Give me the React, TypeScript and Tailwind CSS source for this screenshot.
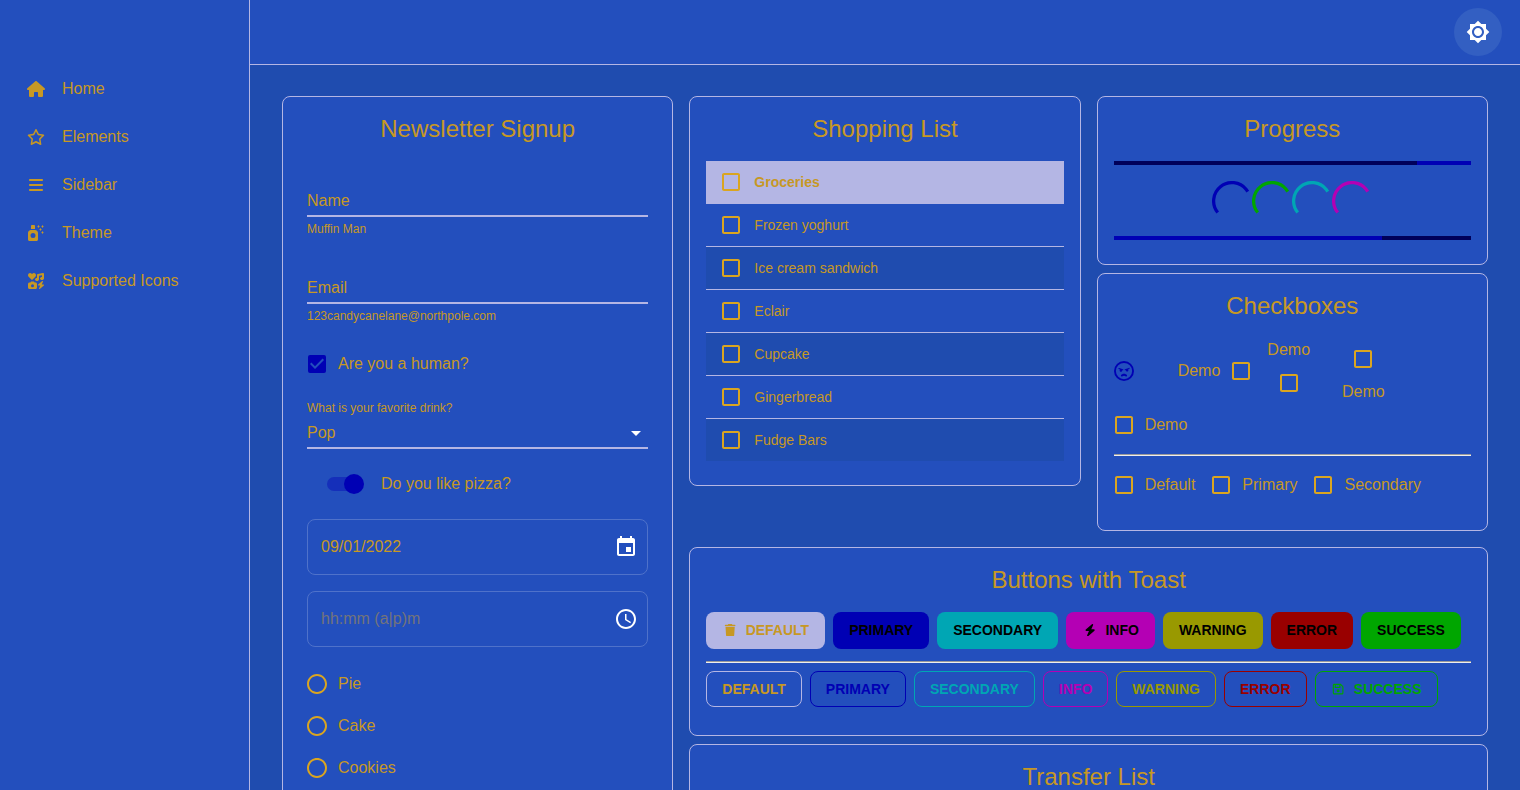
import type { ReactNode } from "react";
import { FaHouse, FaRegStar, FaBars, FaSprayCanSparkles, FaIcons, FaTrash, FaBolt, FaRegFloppyDisk, FaRegFaceAngry } from "react-icons/fa6";
import { MdBrightness7, MdCheckBoxOutlineBlank, MdCheckBox, MdRadioButtonUnchecked, MdArrowDropDown } from "react-icons/md";

const nav = [
  { label: "Home", icon: <FaHouse className="size-[18px]" /> },
  { label: "Elements", icon: <FaRegStar className="size-[18px]" /> },
  { label: "Sidebar", icon: <FaBars /> },
  { label: "Theme", icon: <FaSprayCanSparkles /> },
  { label: "Supported Icons", icon: <FaIcons /> },
];

const foods = ["Frozen yoghurt", "Ice cream sandwich", "Eclair", "Cupcake", "Gingerbread", "Fudge Bars"];

const solid = [
  { label: "Default", cls: "bg-[#b4b6e4] text-[#c79824]", icon: <FaTrash /> },
  { label: "Primary", cls: "bg-[#0000b4]" },
  { label: "Secondary", cls: "bg-[#00a6b4]" },
  { label: "Info", cls: "bg-[#b400b4]", icon: <FaBolt /> },
  { label: "Warning", cls: "bg-[#999900]" },
  { label: "Error", cls: "bg-[#990000]" },
  { label: "Success", cls: "bg-[#00a600]" },
];

const outlined = [
  { label: "Default", cls: "border-[#b4b6e4] text-[#c79824]" },
  { label: "Primary", cls: "border-[#0000b4] text-[#0000b4]" },
  { label: "Secondary", cls: "border-[#00a6b4] text-[#00a6b4]" },
  { label: "Info", cls: "border-[#b400b4] text-[#b400b4]" },
  { label: "Warning", cls: "border-[#999900] text-[#999900]" },
  { label: "Error", cls: "border-[#990000] text-[#990000]" },
  { label: "Success", cls: "border-[#00a600] text-[#00a600]", icon: <FaRegFloppyDisk /> },
];

function Card({ title, className, children }: { title: string; className: string; children?: ReactNode }) {
  return (
    <section className={`rounded-lg border border-[#b4b6e4] bg-[#234fbd] px-4 pt-4 ${className}`}>
      <h2 className="text-center text-2xl leading-8">{title}</h2>
      {children}
    </section>
  );
}

function Box() {
  return <MdCheckBoxOutlineBlank className="size-6 shrink-0 text-[#daa520]" />;
}

function Rule({ className }: { className: string }) {
  return <div className={`h-0.5 border-t border-t-[#9a9a9a] bg-[#eeeeee] ${className}`} />;
}

function Field({ label, helper }: { label: string; helper: string }) {
  return (
    <div className="h-[87px]">
      <div className="h-[31px] border-b-2 border-[#b4b6e4] leading-[30px]">{label}</div>
      <div className="mt-0.5 text-xs leading-5">{helper}</div>
    </div>
  );
}

function ButtonIcon({ children }: { children: ReactNode }) {
  return <span className="mr-2 flex w-[15.3px] justify-center text-[12.25px]">{children}</span>;
}

function Spinner({ className }: { className: string }) {
  return (
    <svg viewBox="22 22 44 44" className={`size-10 ${className}`}>
      <circle cx="44" cy="44" r="20.2" fill="none" stroke="currentColor" strokeWidth="3.6" strokeDasharray="66 200" transform="rotate(141 44 44)" />
    </svg>
  );
}

export default function App() {
  return (
    <div className="flex h-[790px] w-[1520px] overflow-hidden bg-[#1f4caf] font-['Liberation_Sans',Arial,sans-serif] text-base text-[#c79824]">
      <aside className="w-[250px] shrink-0 border-r border-[#b4b6e4] bg-[#234fbd] pt-16">
        <nav>
          {nav.map((n) => (
            <div key={n.label} className="flex h-12 items-center pl-6">
              <span className="flex w-6 justify-center pt-px">{n.icon}</span>
              <span className="ml-3.5 pt-0.5 leading-6">{n.label}</span>
            </div>
          ))}
        </nav>
      </aside>

      <div className="flex min-w-0 flex-1 flex-col">
        <header className="flex h-[65px] shrink-0 items-center justify-end border-b border-[#b4b6e4] bg-[#234fbd] pr-[18px]">
          <button className="flex size-12 items-center justify-center rounded-full bg-[#335fc2] text-white">
            <MdBrightness7 className="size-6" />
          </button>
        </header>

        <main className="flex gap-4 px-8 pt-[31px]">
          <Card title="Newsletter Signup" className="h-[760px] w-[391.33px] shrink-0">
            <div className="px-2 pt-[41px]">
              <Field label="Name" helper="Muffin Man" />
              <Field label="Email" helper="123candycanelane@northpole.com" />
              <div className="-mt-[7px] -ml-0.5 flex h-[22px] items-center gap-[9px]">
                <MdCheckBox className="size-6 text-[#0000b4]" />
                <span>Are you a human?</span>
              </div>
              <div className="mt-[23px] text-xs leading-5">What is your favorite drink?</div>
              <div className="flex h-[31px] items-center justify-between border-b-2 border-[#b4b6e4]">
                <span>Pop</span>
                <MdArrowDropDown className="size-6 text-white" />
              </div>
              <div className="mt-4 flex h-[38px] items-center pl-5">
                <div className="flex h-3.5 w-[34px] items-center justify-end rounded-full bg-[#152fba]">
                  <div className="-mr-[3px] size-5 shrink-0 rounded-full bg-[#0000b4]" />
                </div>
                <span className="ml-5">Do you like pizza?</span>
              </div>
              <div className="mt-4 flex h-14 items-center justify-between rounded-lg border border-[#4f72ca] pr-[9px] pl-[13px]">
                <span>09/01/2022</span>
                <svg viewBox="0 0 24 24" className="size-6 text-white" fill="currentColor">
                  <path d="M17 12h-5v5h5v-5zM16 1v2H8V1H6v2H5c-1.11 0-1.99.9-1.99 2L3 19c0 1.1.89 2 2 2h14c1.1 0 2-.9 2-2V5c0-1.1-.9-2-2-2h-1V1h-2zm3 18H5V8h14v11z" />
                </svg>
              </div>
              <div className="mt-4 flex h-14 items-center justify-between rounded-lg border border-[#4f72ca] pr-[9px] pl-[13px]">
                <span className="text-[#73747a]">hh:mm (a|p)m</span>
                <svg viewBox="0 0 24 24" className="size-6 text-white" fill="currentColor">
                  <path d="M11.99 2C6.47 2 2 6.48 2 12s4.47 10 9.99 10C17.52 22 22 17.52 22 12S17.52 2 11.99 2zM12 20c-4.42 0-8-3.58-8-8s3.58-8 8-8 8 3.58 8 8-3.58 8-8 8z" />
                  <path d="M12.5 7H11v6l5.25 3.15.75-1.23-4.5-2.67z" />
                </svg>
              </div>
              <div className="mt-4">
                {["Pie", "Cake", "Cookies"].map((d) => (
                  <div key={d} className="-ml-0.5 flex h-[42px] items-center gap-[9px]">
                    <MdRadioButtonUnchecked className="size-6 text-[#daa520]" />
                    <span>{d}</span>
                  </div>
                ))}
              </div>
            </div>
          </Card>

          <div className="min-w-0 flex-1">
            <div className="grid h-[435px] grid-cols-2 items-start gap-4">
              <Card title="Shopping List" className="h-[390px]">
                <div className="mt-4 text-sm">
                  <div className="flex h-[43px] items-center gap-[11px] bg-[#b4b6e4] pb-px pl-[13px] font-bold">
                    <Box />
                    <span>Groceries</span>
                  </div>
                  {foods.map((f) => (
                    <div key={f} className="flex h-[43px] items-center gap-[11px] border-b border-[#b4b6e4] pl-[13px] last:h-[42px] last:border-b-0 even:bg-[#234fbd] odd:bg-[#1f4caf]">
                      <Box />
                      <span>{f}</span>
                    </div>
                  ))}
                </div>
              </Card>

              <div className="flex flex-col gap-2">
                <Card title="Progress" className="h-[169px]">
                  <div className="mt-4 flex h-1 bg-[#0000b4]">
                    <div className="w-[303px] bg-[#00005a]" />
                  </div>
                  <div className="mt-4 flex h-10 justify-center">
                    <Spinner className="text-[#0000b4]" />
                    <Spinner className="text-[#00a600]" />
                    <Spinner className="text-[#00a6b4]" />
                    <Spinner className="text-[#b400b4]" />
                  </div>
                  <div className="mt-[15px] flex h-1 bg-[#00005a]">
                    <div className="w-[268px] bg-[#0000b4]" />
                  </div>
                </Card>

                <Card title="Checkboxes" className="h-[258px]">
                  <div className="mt-[17px] flex h-16 items-center">
                    <FaRegFaceAngry className="mx-[0.5px] size-5 text-[#0000b4]" />
                    <div className="ml-[43px] flex items-center gap-[9px]">
                      <span>Demo</span>
                      <Box />
                    </div>
                    <div className="ml-3.5 flex flex-col items-center gap-[9px] pb-2.5">
                      <span>Demo</span>
                      <Box />
                    </div>
                    <div className="ml-8 flex flex-col items-center gap-[9px] pt-2">
                      <Box />
                      <span>Demo</span>
                    </div>
                  </div>
                  <div className="mt-px -ml-0.5 flex h-[42px] items-center gap-[9px]">
                    <Box />
                    <span>Demo</span>
                  </div>
                  <Rule className="mt-2" />
                  <div className="mt-2 -ml-0.5 flex h-[42px] items-center gap-3.5">
                    {["Default", "Primary", "Secondary"].map((c) => (
                      <div key={c} className="flex items-center gap-[9px]">
                        <Box />
                        <span>{c}</span>
                      </div>
                    ))}
                  </div>
                </Card>
              </div>
            </div>

            <Card title="Buttons with Toast" className="mt-4 h-[189px]">
              <div className="mt-4 flex gap-2 text-sm font-bold text-black">
                {solid.map((b) => (
                  <button key={b.label} className={`flex h-[37px] items-center rounded-lg px-4 pb-px uppercase ${b.cls}`}>
                    {b.icon && <ButtonIcon>{b.icon}</ButtonIcon>}
                    {b.label}
                  </button>
                ))}
              </div>
              <Rule className="mt-3" />
              <div className="mt-2 flex gap-2 text-sm font-bold">
                {outlined.map((b) => (
                  <button key={b.label} className={`flex h-9 items-center rounded-lg border px-[15px] uppercase ${b.cls}`}>
                    {b.icon && <ButtonIcon>{b.icon}</ButtonIcon>}
                    {b.label}
                  </button>
                ))}
              </div>
            </Card>
            <Card title="Transfer List" className="mt-2 h-[300px]" />
          </div>
        </main>
      </div>
    </div>
  );
}
